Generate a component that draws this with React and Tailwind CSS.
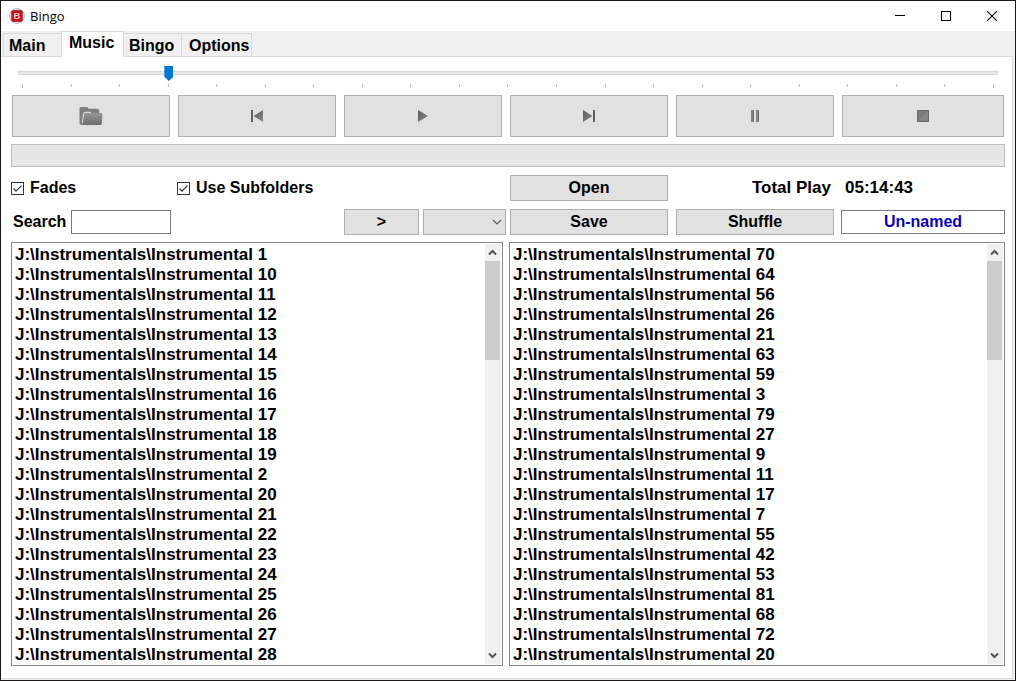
import React from "react";

const LIBRARY = [1, 10, 11, 12, 13, 14, 15, 16, 17, 18, 19, 2, 20, 21, 22, 23, 24, 25, 26, 27, 28];
const PLAYLIST = [70, 64, 56, 26, 21, 63, 59, 3, 79, 27, 9, 11, 17, 7, 55, 42, 53, 81, 68, 72, 20];
const TABS = [
  { name: "Main", size: "w-[58px] pl-[5px]" },
  { name: "Music", size: "w-[63px] pl-[7px]", active: true },
  { name: "Bingo", size: "w-[58px] pl-[5px]" },
  { name: "Options", size: "w-[70px] pl-[7px]" },
];

const face = "border border-[#adadad] bg-[#e1e1e1] flex items-center justify-center";
const columns = "grid grid-cols-[repeat(5,minmax(0,158fr))_minmax(0,162fr)] gap-x-2 px-px";

function AppIcon() {
  return (
    <svg width="16" height="16" viewBox="0 0 16 16" aria-hidden="true">
      <circle cx="8" cy="8" r="7.4" fill="#fbf3f3" stroke="#a9a5a5" strokeWidth="0.9" />
      <rect x="2.7" y="2.5" width="10.6" height="11" rx="1.6" fill="#d00c16" stroke="#8d1519" strokeWidth="0.7" />
      <text x="8" y="11.4" textAnchor="middle" fontFamily="Liberation Sans, sans-serif" fontWeight="bold" fontSize="9.5" fill="#f6c9c9">B</text>
    </svg>
  );
}

function GlyphGradient({ id }) {
  return (
    <defs>
      <linearGradient id={id} x1="0" y1="0" x2="1" y2="1">
        <stop offset="0" stopColor="#5c5c5c" />
        <stop offset="0.6" stopColor="#777777" />
        <stop offset="1" stopColor="#8f8f8f" />
      </linearGradient>
    </defs>
  );
}

function FolderIcon() {
  return (
    <svg width="24" height="20" viewBox="0 0 24 20" aria-hidden="true">
      <defs>
        <linearGradient id="folder-front" x1="0" y1="0" x2="0" y2="1">
          <stop offset="0" stopColor="#979797" />
          <stop offset="1" stopColor="#6c6c6c" />
        </linearGradient>
      </defs>
      <path d="M0.5 2.4 Q0.5 1 2 1 H7.8 Q9 1 9.6 2.8 H18.6 Q20.2 2.8 20.2 4.4 V18.8 H2 Q0.5 18.8 0.5 17 Z" fill="#7e7e7e" />
      <path d="M3.4 17 L4.6 8.2 Q4.9 6.4 6.6 6.4 H12" fill="none" stroke="#d8d8d8" strokeWidth="1.2" />
      <path d="M5.2 8.4 Q5.5 6.9 7 6.9 H22.4 Q23.6 6.9 23.4 8.4 L22.8 17.4 Q22.6 19 21 19 H3.2 Q4 18.6 4.2 17.2 Z" fill="url(#folder-front)" />
    </svg>
  );
}

function PreviousIcon() {
  return (
    <svg width="14" height="14" viewBox="0 0 14 14" aria-hidden="true">
      <GlyphGradient id="previous-fill" />
      <rect x="1" y="1" width="2" height="12" fill="#606060" />
      <path d="M13 1 V13 L3.5 7 Z" fill="url(#previous-fill)" />
    </svg>
  );
}

function PlayIcon() {
  return (
    <svg width="12" height="14" viewBox="0 0 12 14" aria-hidden="true">
      <GlyphGradient id="play-fill" />
      <path d="M1 1 L11 7 L1 13 Z" fill="url(#play-fill)" />
    </svg>
  );
}

function NextIcon() {
  return (
    <svg width="14" height="14" viewBox="0 0 14 14" aria-hidden="true">
      <GlyphGradient id="next-fill" />
      <path d="M1 1 L10.5 7 L1 13 Z" fill="url(#next-fill)" />
      <rect x="11" y="1" width="2" height="12" fill="#606060" />
    </svg>
  );
}

function PauseIcon() {
  return (
    <svg width="10" height="14" viewBox="0 0 10 14" aria-hidden="true">
      <rect x="1" y="1" width="3" height="12" fill="#858585" />
      <rect x="6" y="1" width="3" height="12" fill="#858585" />
      <path d="M3.5 1 V13 M8.5 1 V13" stroke="#6c6c6c" />
    </svg>
  );
}

function StopIcon() {
  return (
    <svg width="14" height="14" viewBox="0 0 14 14" aria-hidden="true">
      <rect x="1" y="1" width="12" height="12" fill="#7b7b7b" />
      <path d="M1 13 L13 1 V13 Z" fill="#868686" />
      <rect x="1.5" y="1.5" width="11" height="11" fill="none" stroke="#6a6a6a" />
    </svg>
  );
}

const TRANSPORT = [
  { label: "Open folder", Icon: FolderIcon },
  { label: "Previous", Icon: PreviousIcon },
  { label: "Play", Icon: PlayIcon },
  { label: "Next", Icon: NextIcon },
  { label: "Pause", Icon: PauseIcon },
  { label: "Stop", Icon: StopIcon },
];

function TitleBar() {
  return (
    <header className="flex h-[30px] items-center bg-white pl-2">
      <AppIcon />
      <h1 className="flex-1 pl-[5px] font-['Open_Sans',sans-serif] text-[13px] leading-5 font-normal">Bingo</h1>
      <button aria-label="Minimize" className="flex h-full w-[46px] items-center justify-center">
        <svg width="10" height="10"><path d="M0 4.5 H10" stroke="#000" /></svg>
      </button>
      <button aria-label="Maximize" className="flex h-full w-[46px] items-center justify-center">
        <svg width="10" height="10"><rect x="0.5" y="0.5" width="9" height="9" fill="none" stroke="#000" /></svg>
      </button>
      <button aria-label="Close" className="flex h-full w-[46px] items-center justify-center">
        <svg width="10" height="10"><path d="M0 0 L10 10 M10 0 L0 10" stroke="#000" strokeWidth="1.1" /></svg>
      </button>
    </header>
  );
}

function Tabs() {
  return (
    <div role="tablist" className="flex h-[26px] items-end bg-[#f0f0f0] pl-0.5">
      {TABS.map((tab) => (
        <button
          key={tab.name}
          role="tab"
          aria-selected={!!tab.active}
          className={
            "border-t border-[#d9d9d9] text-left leading-5 " +
            tab.size +
            (tab.active ? " z-10 h-[26px] border-x bg-white pb-1" : " h-6 border-r bg-[#f0f0f0] first:border-l first:border-r-0")
          }
        >
          {tab.name}
        </button>
      ))}
    </div>
  );
}

function Seek() {
  return (
    <div className="flex flex-col px-[7px] pt-2">
      <input
        type="range"
        aria-label="Position"
        min="0"
        max="20"
        defaultValue="3"
        className="m-0 h-4 w-full appearance-none bg-transparent [&::-webkit-slider-runnable-track]:h-1 [&::-webkit-slider-runnable-track]:border [&::-webkit-slider-runnable-track]:border-[#d6d6d6] [&::-webkit-slider-runnable-track]:bg-[#e7eaea] [&::-webkit-slider-thumb]:-mt-[6px] [&::-webkit-slider-thumb]:h-[15px] [&::-webkit-slider-thumb]:w-[9px] [&::-webkit-slider-thumb]:appearance-none [&::-webkit-slider-thumb]:bg-[#0078d7] [&::-webkit-slider-thumb]:[clip-path:polygon(0_0,100%_0,100%_72%,50%_100%,0_72%)]"
      />
      <div className="flex h-3.5 justify-between px-1 pt-[3px]">
        {Array.from({ length: 21 }, (_, i) => (
          <span key={i} className="h-[3px] w-px bg-[#bdbdbd] first:h-1 last:h-1" />
        ))}
      </div>
    </div>
  );
}

function Check({ label }) {
  return (
    <label className="-ml-px flex items-center gap-1.5 whitespace-nowrap">
      <span className="grid">
        <input type="checkbox" defaultChecked className="peer col-start-1 row-start-1 m-0 size-[13px] appearance-none border border-[#333] bg-white" />
        <svg width="13" height="13" className="pointer-events-none invisible col-start-1 row-start-1 peer-checked:visible">
          <path d="M2.5 6.5 L5 9.2 L10.5 3.6" fill="none" stroke="#333" strokeWidth="1.2" />
        </svg>
      </span>
      {label}
    </label>
  );
}

function TrackList({ label, tracks }) {
  return (
    <section aria-label={label} className="flex border border-[#828790] bg-white">
      <ul className="min-w-0 flex-1 pt-0.5 pl-[3px] text-[17px] leading-5">
        {tracks.map((n) => (
          <li key={n} className="truncate">{"J:\\Instrumentals\\Instrumental " + n}</li>
        ))}
      </ul>
      <div className="my-px mr-px flex w-4 flex-col bg-[#f0f0f0] pr-px">
        <button aria-label="Scroll up" className="flex h-[17px] items-center justify-center">
          <svg width="9" height="7"><path d="M1 5.5 L4.5 2 L8 5.5" fill="none" stroke="#555" strokeWidth="2" /></svg>
        </button>
        <div className="h-[99px] bg-[#cdcdcd]" />
        <div className="flex-1" />
        <button aria-label="Scroll down" className="flex h-[17px] items-center justify-center">
          <svg width="9" height="7"><path d="M1 1.5 L4.5 5 L8 1.5" fill="none" stroke="#555" strokeWidth="2" /></svg>
        </button>
      </div>
    </section>
  );
}

export default function App() {
  return (
    <div className="flex min-h-screen flex-col border border-[#1c1618] bg-[#f0f0f0] font-['Liberation_Sans',Arial,sans-serif] text-base leading-5 text-black">
      <TitleBar />
      <div className="flex flex-1 flex-col font-bold">
        <Tabs />
        <main className="-mt-px mr-0.5 mb-px flex flex-1 flex-col border-t border-r border-b border-[#dcdcdc] bg-white pr-[7px] pb-3 pl-2.5">
          <Seek />
          <div className={columns}>
            {TRANSPORT.map(({ label, Icon }) => (
              <button key={label} aria-label={label} className={face + " h-[42px]"}>
                <Icon />
              </button>
            ))}
          </div>
          <div role="progressbar" aria-label="Track progress" aria-valuenow={0} className="mt-[7px] h-[23px] border border-[#bcbcbc] bg-[#e6e6e6]" />
          <div className={columns + " mt-2 h-[26px] items-center"}>
            <Check label="Fades" />
            <Check label="Use Subfolders" />
            <button className={face + " col-start-4 h-[26px]"}>Open</button>
            <span className="pr-[3px] text-right text-[17px]">Total Play</span>
            <span className="pl-[3px] text-[17px]">05:14:43</span>
          </div>
          <div className={columns + " mt-2 h-[26px] items-center"}>
            <label className="flex items-center gap-[5px] pl-px">
              Search
              <input type="text" className="h-6 w-[100px] border border-[#7a7a7a] bg-white px-1" />
            </label>
            <div className="col-start-3 -mr-1 flex gap-1">
              <button className={face + " h-[26px] w-[75px]"}>&gt;</button>
              <div className="grid flex-1 items-center">
                <select aria-label="Playlist" className="col-start-1 row-start-1 h-[26px] w-full appearance-none border border-[#adadad] bg-[#e1e1e1] px-1">
                  <option></option>
                </select>
                <svg width="10" height="6" className="pointer-events-none col-start-1 row-start-1 mr-1 justify-self-end">
                  <path d="M1 1 L5 5 L9 1" fill="none" stroke="#555" strokeWidth="1.1" />
                </svg>
              </div>
            </div>
            <button className={face + " h-[26px]"}>Save</button>
            <button className={face + " h-[26px]"}>Shuffle</button>
            <div className="-mx-px flex">
              <input
                type="text"
                aria-label="Playlist name"
                defaultValue="Un-named"
                className="h-6 w-full min-w-0 border border-[#7a7a7a] bg-white text-center text-[#0a00b4]"
              />
            </div>
          </div>
          <div className="mt-[7px] grid grid-cols-[492fr_496fr] gap-1.5">
            <TrackList label="Library" tracks={LIBRARY} />
            <TrackList label="Playlist tracks" tracks={PLAYLIST} />
          </div>
        </main>
      </div>
    </div>
  );
}
